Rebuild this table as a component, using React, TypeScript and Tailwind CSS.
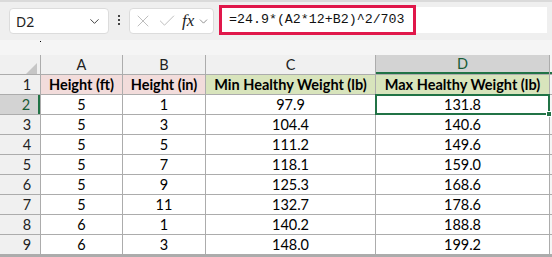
import { ChevronDown, X, Check } from "lucide-react"

const rows = [
  ["5", "1", "97.9", "131.8"],
  ["5", "3", "104.4", "140.6"],
  ["5", "5", "111.2", "149.6"],
  ["5", "7", "118.1", "159.0"],
  ["5", "9", "125.3", "168.6"],
  ["5", "11", "132.7", "178.6"],
  ["6", "1", "140.2", "188.8"],
  ["6", "3", "148.0", "199.2"],
]

const cols = "grid grid-cols-[40px_81px_82px_169px_173px_3px] gap-x-px"

function FormulaBar() {
  return (
    <div className="flex items-start h-[40px] border-t-2 border-[#dadada] bg-[#efefef] pt-[3px]">
      <div className="ml-[9px] mt-[3px] flex h-[26px] w-[100px] items-center justify-between rounded-[4px] border border-[#dcdcdc] bg-white pl-[6px] pr-[6px]">
        <span className="text-[14px] text-[#222] font-['Noto_Sans',sans-serif]">D2</span>
        <ChevronDown size={15} strokeWidth={1.6} className="text-[#444]" />
      </div>
      <div className="ml-[9px] mt-[10px] flex flex-col gap-[2px]">
        <span className="block h-[2px] w-[2px] bg-[#444]" />
        <span className="block h-[2px] w-[2px] bg-[#444]" />
        <span className="block h-[2px] w-[2px] bg-[#444]" />
      </div>
      <div className="ml-[9px] mt-[3px] flex h-[26px] w-[85px] items-center rounded-[4px] border border-[#dcdcdc] bg-white pl-[3px]">
        <X size={20} strokeWidth={1.1} className="text-[#b8b8b8]" />
        <Check size={20} strokeWidth={1.1} className="ml-[4px] text-[#b8b8b8]" />
        <span className="ml-[5px] text-[17px] italic text-[#222] font-['Liberation_Serif',serif]">fx</span>
        <ChevronDown size={13} strokeWidth={1.5} className="ml-[3px] text-[#777]" />
      </div>
      <div className="ml-[5px] flex h-[30px] flex-1 items-center">
        <div className="flex h-[30px] w-[197px] items-center border-[3px] border-[#e0174a] bg-white pl-[7px]">
          <span className="text-[13.3px] text-[#111] font-['Liberation_Mono',monospace]">=24.9*(A2*12+B2)^2/703</span>
        </div>
        <div className="h-[26px] w-[131px] bg-white" />
      </div>
    </div>
  )
}

export default function App() {
  return (
    <div className="w-[552px] h-[257px] overflow-hidden bg-[#f5f5f5] font-['Lato',sans-serif] text-[14.5px] text-black">
      <FormulaBar />
      <div className="h-[15px] relative">
        <span className="absolute left-[40px] top-[1px] h-[1px] w-[1px] bg-black" />
      </div>
      <div className={`${cols} bg-[#acacac] h-[202px] content-start gap-y-px`}>
        <div className="relative h-[19px] bg-[#f0f0f0]">
          <svg className="absolute left-[26px] top-[8px]" width="11" height="11" viewBox="0 0 11 11">
            <polygon points="11,0 11,11 0,11" fill="#c6c6c6" />
          </svg>
        </div>
        {["A", "B", "C"].map((c) => (
          <div key={c} className="flex h-[19px] items-center justify-center bg-[#f0f0f0] text-[#222]">
            {c}
          </div>
        ))}
        <div className="flex h-[19px] items-center justify-center border-b-2 border-[#217346] bg-[#d3d3d3] text-[#185c37]">
          D
        </div>
        <div className="h-[19px] border-b-2 border-[#217346] bg-[#f5f5f5]" />

        <div className="flex h-[19px] items-center justify-center bg-[#f0f0f0] pl-[14px] text-[#222]">1</div>
        <div className="flex h-[19px] items-center justify-center bg-[#f2dcdb] font-bold">Height (ft)</div>
        <div className="flex h-[19px] items-center justify-center bg-[#f2dcdb] font-bold">Height (in)</div>
        <div className="flex h-[19px] items-center justify-center bg-[#d8e4bc] font-bold">Min Healthy Weight (lb)</div>
        <div className="flex h-[19px] items-center justify-center bg-[#d8e4bc] font-bold">Max Healthy Weight (lb)</div>
        <div className="h-[19px] bg-[#f5f5f5]" />

        {rows.map((r, i) => {
          const sel = i === 0
          return [
            <div
              key={`h${i}`}
              className={
                sel
                  ? "flex h-[19px] items-center justify-center border-r-2 border-[#217346] bg-[#d3d3d3] pl-[14px] text-[#185c37]"
                  : "flex h-[19px] items-center justify-center bg-[#f0f0f0] pl-[14px] text-[#222]"
              }
            >
              {i + 2}
            </div>,
            ...r.map((v, j) =>
              sel && j === 3 ? (
                <div key={`c${i}${j}`} className="relative -m-px flex h-[21px] items-center justify-center border-2 border-[#217346] bg-white">
                  {v}
                  <span className="absolute -bottom-[4px] -right-[4px] h-[6px] w-[6px] border border-white bg-[#217346]" />
                </div>
              ) : (
                <div key={`c${i}${j}`} className="flex h-[19px] items-center justify-center bg-white">
                  {v}
                </div>
              )
            ),
            <div key={`f${i}`} className="h-[19px] bg-[#f5f5f5]" />,
          ]
        })}
      </div>
    </div>
  )
}
